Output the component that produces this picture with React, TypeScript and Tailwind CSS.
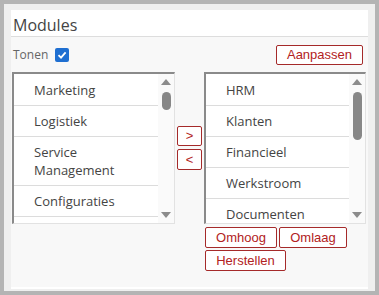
import React from "react";

const leftItems = ["Marketing", "Logistiek", "Service Management", "Configuraties", ""];
const rightItems = ["HRM", "Klanten", "Financieel", "Werkstroom", "Documenten"];

const btn =
  "bg-white border border-[#a52a2a] rounded-[2px] text-[#b22222] text-[13px] leading-[16px] font-['Liberation_Sans',Arial,sans-serif]";

function Scrollbar({ thumbHeight }: { thumbHeight: number }) {
  return (
    <div className="w-[16px] shrink-0 bg-[#fafafa] flex flex-col items-center pt-[5px] pb-[5px]">
      <svg width="10" height="6" viewBox="0 0 10 6">
        <path d="M0 6 L5 0 L10 6 Z" fill="#8c8c8c" />
      </svg>
      <div className="flex-1 w-full flex flex-col items-center">
        <div style={{ height: thumbHeight }} className="mt-[7px] w-[9px] rounded-full bg-[#878787]" />
      </div>
      <svg width="10" height="6" viewBox="0 0 10 6">
        <path d="M0 0 L10 0 L5 6 Z" fill="#8c8c8c" />
      </svg>
    </div>
  );
}

function ListBox({ items, width, thumbHeight }: { items: string[]; width: string; thumbHeight: number }) {
  return (
    <div
      className={`${width} h-[152px] shrink-0 flex bg-white border-t-2 border-l-2 border-t-[#8a8a8a] border-l-[#8a8a8a] border-r border-b border-r-[#e2e2e2] border-b-[#e2e2e2] overflow-hidden`}
    >
      <ul className="flex-1 overflow-hidden pt-[1px]">
        {items.map((item, i) => (
          <li
            key={i}
            className="pl-[20px] pr-2 py-[6px] min-h-[31px] leading-[18px] text-[13px] text-[#444444] border-b border-[#dcdcdc]"
          >
            {item === "Service Management" ? (
              <>
                Service
                <br />
                Management
              </>
            ) : (
              item
            )}
          </li>
        ))}
      </ul>
      <Scrollbar thumbHeight={thumbHeight} />
    </div>
  );
}

export default function App() {
  return (
    <div className="w-[379px] h-[295px] bg-[#b4b4b4] p-[4px] font-['Open_Sans',sans-serif]">
      <div className="h-full bg-[#efefef] pl-[7px] pr-[7px] pt-[6px] pb-[2px]">
        <div className="h-full flex flex-col bg-[#f8f8f8] border-b-2 border-white">
          <div className="h-[27px] shrink-0 bg-white border-b border-[#dddddd] pl-[2px] pt-[4px] flex items-center">
            <span className="text-[16px] text-[#444444] leading-none">Modules</span>
          </div>

          <div className="flex items-center justify-between mt-[8px] h-[20px] pl-[2px] pr-[5px]">
            <div className="flex items-center gap-[7px]">
              <span className="text-[12px] text-[#666666]">Tonen</span>
              <span className="w-[14px] h-[14px] rounded-[2px] bg-[#1f6fd1] flex items-center justify-center">
                <svg width="10" height="10" viewBox="0 0 10 10">
                  <path d="M1.5 5.2 L4 7.6 L8.6 2.4" fill="none" stroke="#ffffff" strokeWidth="1.8" />
                </svg>
              </span>
            </div>
            <button className={`${btn} w-[87px] h-[20px]`}>Aanpassen</button>
          </div>

          <div className="flex mt-[7px] pl-[1px]">
            <ListBox items={leftItems} width="w-[163px]" thumbHeight={18} />
            <div className="w-[29px] flex flex-col items-center justify-center gap-[3px]">
              <button className={`${btn} w-[25px] h-[20px]`}>&gt;</button>
              <button className={`${btn} w-[25px] h-[21px]`}>&lt;</button>
            </div>
            <ListBox items={rightItems} width="w-[162px]" thumbHeight={48} />
          </div>

          <div className="pl-[194px] mt-[3px] flex flex-col gap-[2px]">
            <div className="flex gap-[2px]">
              <button className={`${btn} w-[72px] h-[21px]`}>Omhoog</button>
              <button className={`${btn} w-[68px] h-[21px]`}>Omlaag</button>
            </div>
            <div className="flex">
              <button className={`${btn} w-[81px] h-[21px]`}>Herstellen</button>
            </div>
          </div>
        </div>
      </div>
    </div>
  );
}
